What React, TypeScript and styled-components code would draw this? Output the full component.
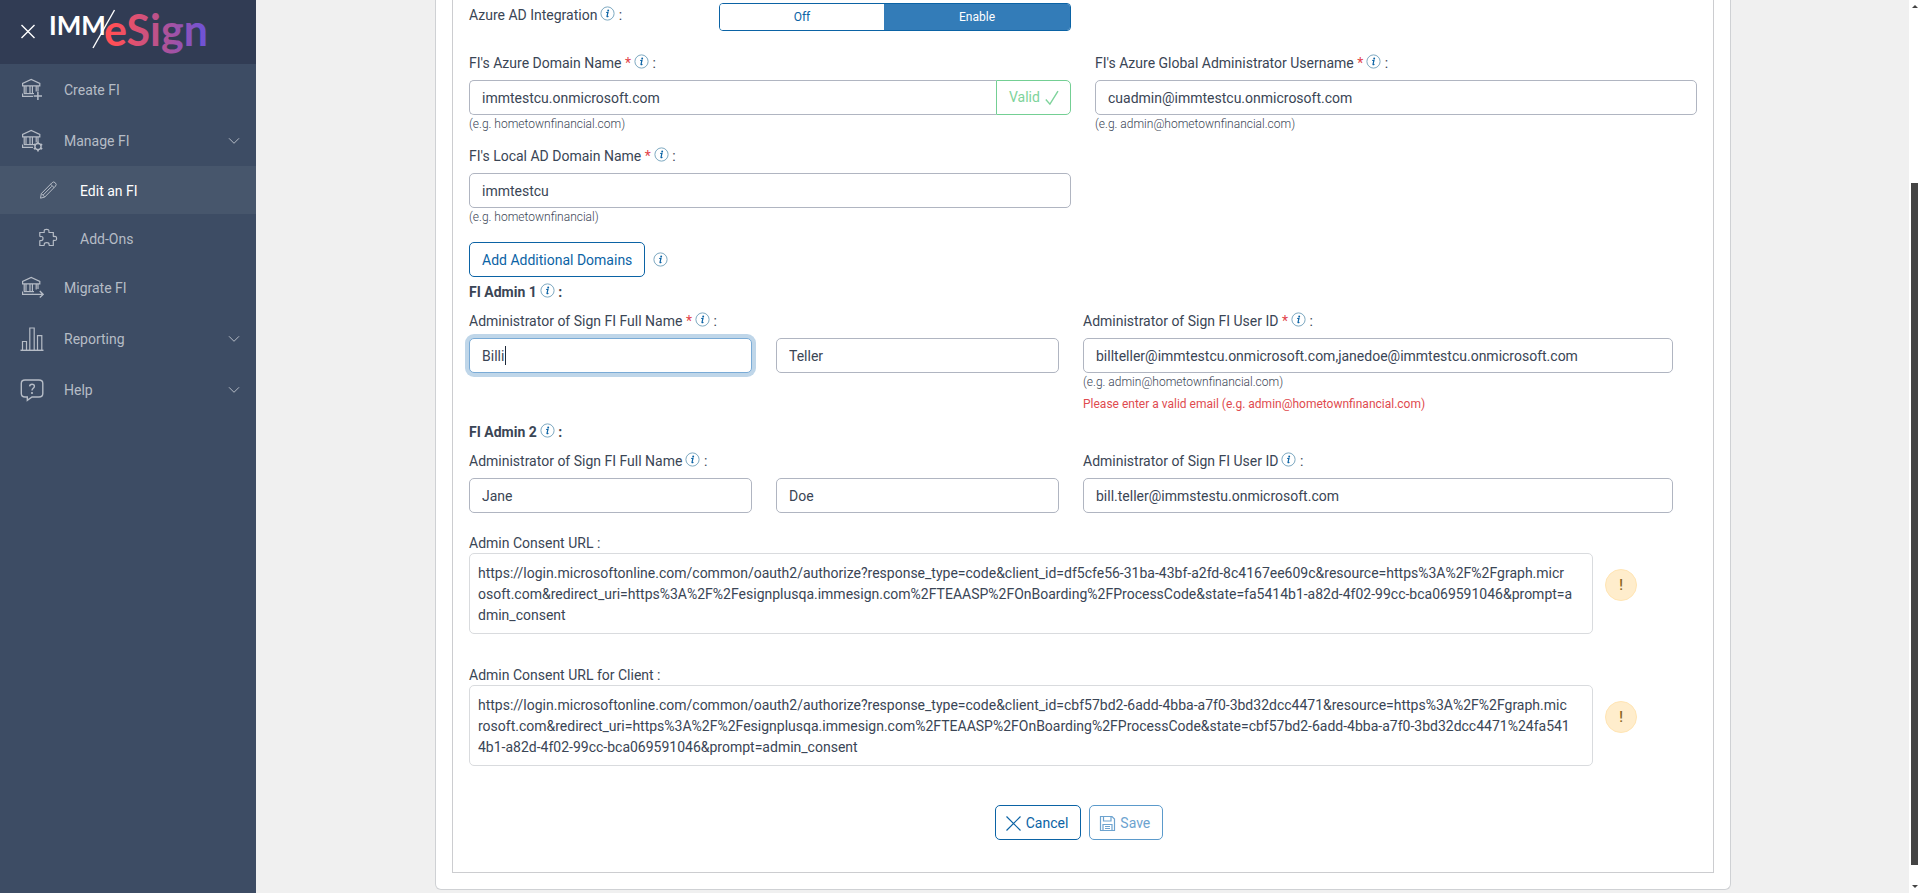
import React, { useId, useState } from "react";
import styled, { createGlobalStyle, css } from "styled-components";

const GlobalStyle = createGlobalStyle`
  *, *::before, *::after { box-sizing: border-box; }
  body {
    margin: 0;
    background: #f0f0f0;
    color: #3a4555;
    font-family: Roboto, "Liberation Sans", sans-serif;
    font-size: 14px;
    line-height: 21px;
  }
  button, input, textarea { font: inherit; color: inherit; }
`;

const Page = styled.div`
  display: flex;
  min-height: 100vh;
`;

/* ---------- Sidebar ---------- */

const Sidebar = styled.aside`
  flex: 0 0 256px;
  background: #3d4c64;
`;

const Brand = styled.header`
  display: flex;
  align-items: center;
  height: 64px;
  padding-left: 20px;
  background: #313c54;
`;

const CloseButton = styled.button`
  display: flex;
  margin: 0 12px 0 0;
  padding: 0;
  border: 0;
  background: none;
  color: #fff;
  cursor: pointer;
`;

const NavList = styled.ul`
  margin: 0;
  padding: 0;
  list-style: none;
`;

const NavLink = styled.a<{ $sub?: boolean; $active?: boolean }>`
  display: flex;
  align-items: center;
  height: ${(p) => (p.$sub ? 48 : 51)}px;
  padding: 0 16px 0 ${(p) => (p.$sub ? 36 : 20)}px;
  background: ${(p) => (p.$active ? "#47566c" : "transparent")};
  color: ${(p) => (p.$active ? "#fff" : "#b6bcc6")};
  text-decoration: none;
`;

const NavIcon = styled.span`
  display: flex;
  flex: 0 0 44px;
  color: #b6bcc6;
`;

const NavText = styled.span`
  flex: 1;
  padding-top: 2px;
`;

/* ---------- Content ---------- */

const Main = styled.main`
  flex: 1;
  min-width: 0;
  padding: 0 178px 0 179px;
`;

const Card = styled.section`
  padding: 0 16px 16px;
  border: 1px solid #cfd1d4;
  border-top: 0;
  border-radius: 0 0 6px 6px;
  background: #fff;
`;

const Panel = styled.form`
  padding: 3px 16px 32px;
  border: 1px solid #cccdd0;
  border-top: 0;
`;

const ToggleRow = styled.div`
  display: flex;
  align-items: flex-start;
  height: 28px;
  margin-bottom: 21px;
  padding-right: 626px;
`;

const ToggleLabel = styled.span`
  flex: 0 0 250px;
  line-height: 25px;
`;

const Toggle = styled.div`
  display: flex;
  flex: 1;
  height: 28px;
  border: 1px solid #0b63a5;
  border-radius: 4px;
  overflow: hidden;
`;

const ToggleOption = styled.button<{ $on?: boolean; $grow: number }>`
  flex: ${(p) => p.$grow} 1 0;
  padding: 0;
  border: 0;
  background: ${(p) => (p.$on ? "#337cb8" : "#fff")};
  color: ${(p) => (p.$on ? "#fff" : "#0b63a5")};
  font-size: 12px;
  line-height: 24px;
`;

const Grid = styled.div<{ $columns: number; $inset?: boolean }>`
  display: grid;
  grid-template-columns: repeat(${(p) => p.$columns}, 1fr);
  column-gap: 24px;
  row-gap: 12px;
  padding-right: ${(p) => (p.$inset ? 24 : 0)}px;
`;

const FieldBox = styled.div<{ $span?: number }>`
  grid-column: span ${(p) => p.$span ?? 1};
  display: flex;
  flex-direction: column;
  justify-content: flex-start;
`;

const Label = styled.label`
  display: block;
  height: 28px;
  line-height: 23px;
  white-space: nowrap;
`;

const LabelSpacer = styled.div`
  height: 28px;
`;

const Required = styled.span`
  color: #e2444b;
`;

const InputWrap = styled.div`
  position: relative;
  display: flex;
`;

const Input = styled.input<{ $focused?: boolean; $joined?: boolean }>`
  flex: 1;
  width: 100%;
  min-width: 0;
  height: 35px;
  padding: 0 12px;
  border: 1px solid #b0b5c1;
  border-radius: ${(p) => (p.$joined ? "5px 0 0 5px" : "5px")};
  background: #fff;
  outline: none;
  ${(p) =>
    p.$joined &&
    css`
      border-right: 0;
    `}
  ${(p) =>
    p.$focused &&
    css`
      border-color: #7aabd6;
      box-shadow: 0 0 0 4px #bfd6e9;
    `}
`;

const Caret = styled.span`
  position: absolute;
  top: 8px;
  left: 36px;
  width: 1px;
  height: 19px;
  background: #1f2a3a;
`;

const ValidTag = styled.span`
  display: flex;
  align-items: center;
  justify-content: space-between;
  flex: 0 0 75px;
  padding: 0 11px 0 12px;
  border: 1px solid #74cf94;
  border-radius: 0 5px 5px 0;
  color: #7ed39b;
`;

const Hint = styled.small`
  font-size: 12px;
  font-weight: 300;
  line-height: 18px;
`;

const FieldError = styled.p`
  margin: 4px 0 0;
  color: #e04b4f;
  font-size: 12px;
  line-height: 18px;
`;

const GroupTitle = styled.h3<{ $gap: number }>`
  margin: ${(p) => p.$gap}px 0 7px;
  font-size: 14px;
  font-weight: 700;
  line-height: 21px;
`;

const Button = styled.button`
  display: inline-flex;
  align-items: center;
  gap: 4px;
  height: 35px;
  padding: 1px 12px 0;
  border: 1px solid #0b63a5;
  border-radius: 5px;
  background: #fff;
  color: #0b63a5;
  cursor: pointer;

  &:disabled {
    border-color: #5b9acb;
    color: #6da3cf;
    cursor: default;
  }
`;

const ActionButton = styled(Button)`
  margin-right: 8px;
  padding: 1px 12px 0 9px;
`;

const DomainRow = styled.div`
  display: flex;
  align-items: center;
  gap: 5px;
  margin-top: 16px;
`;

const ConsentBlock = styled.div<{ $gap: number }>`
  margin-top: ${(p) => p.$gap}px;
`;

const ConsentLabel = styled.label`
  display: block;
  height: 21px;
  line-height: 23px;
`;

const ConsentRow = styled.div`
  display: flex;
  gap: 12px;
  padding-right: 60px;
`;

const UrlBox = styled.textarea`
  display: block;
  flex: 1;
  min-width: 0;
  padding: 9px 8px 7px;
  border: 1px solid #d9dbde;
  border-radius: 5px;
  background: #fff;
  line-height: 21px;
  word-break: break-all;
  resize: none;
  overflow: hidden;
  outline: none;
`;

const WarnBadge = styled.span`
  display: flex;
  align-items: center;
  justify-content: center;
  flex: 0 0 32px;
  height: 32px;
  margin-top: 16px;
  border: 1px solid #ffe5b4;
  border-radius: 50%;
  background: #ffedcc;
  color: #8a6420;
  font-weight: 500;
`;

const Actions = styled.div`
  display: flex;
  justify-content: center;
  margin-top: 39px;
`;

const InfoSvg = styled.svg`
  margin-left: 3px;
  vertical-align: -1px;
`;

/* ---------- Scroll track ---------- */

const Track = styled.div`
  display: flex;
  flex-direction: column;
  flex: 0 0 11px;
  height: 100vh;
  padding: 5px 0 5px 2px;
  background: #fff;
`;

const Arrow = styled.span<{ $down?: boolean }>`
  width: 0;
  height: 0;
  margin-left: 1px;
  border: 3px solid transparent;
  border-top: ${(p) => (p.$down ? "3px solid #444" : "0")};
  border-bottom: ${(p) => (p.$down ? "0" : "3px solid #444")};
`;

const Thumb = styled.span`
  flex: 1;
  width: 7px;
  margin: 175px 0 20px;
  background: #444;
`;

/* ---------- Icons ---------- */

const stroke = { fill: "none", stroke: "currentColor", strokeWidth: 1.2 } as const;

const Info = () => (
  <InfoSvg width="15" height="15" viewBox="0 0 15 15" role="img" aria-label="More information">
    <circle cx="7.5" cy="7.5" r="6.6" fill="none" stroke="#6f9fba" strokeWidth="0.9" />
    <circle cx="8.2" cy="4.4" r="0.95" fill="#0b63a5" />
    <path d="M6.2 6.5 L8 6.2 L7 10.4 Q6.9 11.1 8.4 10.2" fill="none" stroke="#0b63a5" strokeWidth="1.2" />
  </InfoSvg>
);

const CloseIcon = () => (
  <svg width="16" height="16" viewBox="0 0 16 16" {...stroke} aria-hidden>
    <path d="M1.5 1 L14.5 14 M14.5 1 L1.5 14" strokeWidth="1.4" />
  </svg>
);

const Bank = ({ children }: { children?: React.ReactNode }) => (
  <svg width="24" height="24" viewBox="0 0 24 24" {...stroke} aria-hidden>
    <path d="M2.6 7.9 V5.4 L11.2 1.5 L19.8 5.4 V7.9 Z" />
    <path d="M4.2 8 V15.5 M6 8 V15.5 M10 8 V15.5 M12.4 8 V15.5 M16.2 8 V13.5 M18 8 V13" />
    <path d="M4 15.6 H14" />
    <path d="M13 18.4 H2.6 V15.6" />
    {children}
  </svg>
);

const BankPlus = () => (
  <Bank>
    <path d="M17.9 13.6 V22 M13.7 17.9 H22" strokeWidth="1.5" />
  </Bank>
);

const BankGear = () => (
  <Bank>
    <circle cx="18" cy="17.6" r="3.1" strokeWidth="1.4" />
    <path
      d="M18 12.8 V14.5 M18 20.7 V22.4 M13.8 15.2 L15.3 16 M20.7 19.2 L22.2 20 M13.8 20 L15.3 19.2 M20.7 16 L22.2 15.2"
      strokeWidth="1.7"
    />
  </Bank>
);

const BankArrow = () => (
  <Bank>
    <path d="M12.5 18.4 H23 M19.8 15 L23.2 18.4 L19.8 21.6" strokeWidth="1.4" />
  </Bank>
);

const BarsIcon = () => (
  <svg width="24" height="26" viewBox="0 0 24 26" {...stroke} aria-hidden>
    <path d="M0.5 24.3 H23.5" strokeWidth="1.4" />
    <path d="M2.5 24 V15.5 H6.5 V24 M9.8 24 V2 H14.2 V24 M17.5 24 V9.7 H21.8 V24" />
  </svg>
);

const HelpIcon = () => (
  <svg width="24" height="24" viewBox="0 0 24 24" {...stroke} aria-hidden>
    <path
      d="M5 2 H19 Q22.8 2 22.8 5.5 V15.5 Q22.8 19 19 19 H12 L7.3 22.4 V19 H5 Q1.3 19 1.3 15.5 V5.5 Q1.3 2 5 2 Z"
      strokeWidth="1.4"
    />
    <path d="M9.6 8.4 Q9.8 6.2 12 6.2 Q14.4 6.2 14.4 8.3 Q14.4 9.5 13.1 10.3 Q12 11 12 12.6" strokeWidth="1.4" />
    <circle cx="12" cy="15" r="0.5" />
  </svg>
);

const PencilIcon = () => (
  <svg width="24" height="20" viewBox="0 0 24 20" {...stroke} strokeWidth="1" aria-hidden>
    <path d="M4.5 18.2 L5.3 13.6 L16.2 2.6 Q17.6 1.2 19.2 2.7 Q21 4.4 19.6 6 L8.8 17 Z M14.6 4.3 L18.1 7.6 M5.3 13.6 L8.8 17" />
    <path d="M7.2 15 L15.8 6.3" />
  </svg>
);

const PuzzleIcon = () => (
  <svg width="24" height="20" viewBox="0 0 24 20" {...stroke} aria-hidden>
    <path d="M3.8 4.5 H8 Q8.6 4.3 8.2 3.4 Q7.9 1.3 10.6 1.3 Q13.3 1.3 12.9 3.4 Q12.6 4.3 13.2 4.5 H17.3 V8 Q17.5 8.9 18.4 8.4 Q20.6 8 20.6 10.4 Q20.6 12.9 18.4 12.4 Q17.5 12 17.3 12.9 V17.5 H13.4 Q12.8 17.2 13.1 16.4 Q13.1 14.6 10.7 14.6 Q8.2 14.6 8.2 16.4 Q8.5 17.2 7.9 17.5 H3.8 V13 Q4 12.3 5 12.6 Q7 12.6 7 10.5 Q7 8.4 5 8.5 Q4 8.8 3.8 8 Z" />
  </svg>
);

const Chevron = () => (
  <svg width="12" height="8" viewBox="0 0 12 8" {...stroke} strokeWidth="1" aria-hidden>
    <path d="M1 1.3 L6 6.3 L11 1.3" />
  </svg>
);

const CheckIcon = () => (
  <svg width="14" height="16" viewBox="0 0 14 16" {...stroke} strokeWidth="1.4" aria-hidden>
    <path d="M0.8 9.5 L4.9 14.2 L13 1.2" />
  </svg>
);

const CancelIcon = () => (
  <svg width="17" height="17" viewBox="0 0 17 17" {...stroke} aria-hidden>
    <path d="M1.5 1.5 L15.5 15.5 M15.5 1.5 L1.5 15.5" />
  </svg>
);

const SaveIcon = () => (
  <svg width="17" height="17" viewBox="0 0 17 17" {...stroke} aria-hidden>
    <path d="M1.5 1.5 H13 L15.5 4 V15.5 H1.5 Z M4.5 1.5 V6 H12 V1.5 M4 15.5 V9.5 H13 V15.5 M6 11.5 H11 M6 13.5 H11" />
  </svg>
);

const Logo = () => (
  <svg width="176" height="64" viewBox="0 0 176 64" role="img" aria-label="IMM/eSign">
    <defs>
      <linearGradient id="esign" gradientUnits="userSpaceOnUse" x1="56" y1="0" x2="158" y2="0">
        <stop offset="0.1" stopColor="#ff4f57" />
        <stop offset="0.5" stopColor="#bf5289" />
        <stop offset="1" stopColor="#6c53d8" />
      </linearGradient>
    </defs>
    <text x="1" y="35" fill="#fff" fontFamily="Lato, sans-serif" fontWeight="700" fontSize="26">
      IMM
    </text>
    <path d="M45 48 L66.5 10" stroke="#fff" strokeWidth="1.4" />
    <text x="56" y="46" fill="url(#esign)" fontFamily="Lato, sans-serif" fontWeight="700" fontSize="43">
      eSign
    </text>
  </svg>
);

/* ---------- Composite parts ---------- */

interface FieldProps {
  label?: string;
  ariaLabel?: string;
  value: string;
  required?: boolean;
  hint?: string;
  error?: string;
  valid?: boolean;
  focused?: boolean;
  span?: number;
}

const Field = ({ label, ariaLabel, value, required, hint, error, valid, focused, span }: FieldProps) => {
  const id = useId();
  const [text, setText] = useState(value);
  return (
    <FieldBox $span={span}>
      {label ? (
        <Label htmlFor={id}>
          {label}
          {required && <Required> *</Required>}
          <Info /> :
        </Label>
      ) : (
        <LabelSpacer />
      )}
      <InputWrap>
        <Input
          id={id}
          type="text"
          aria-label={ariaLabel}
          value={text}
          onChange={(e) => setText(e.target.value)}
          $joined={valid}
          $focused={focused}
        />
        {focused && <Caret />}
        {valid && (
          <ValidTag>
            Valid <CheckIcon />
          </ValidTag>
        )}
      </InputWrap>
      {hint && <Hint>{hint}</Hint>}
      {error && <FieldError>{error}</FieldError>}
    </FieldBox>
  );
};

const Consent = ({ label, url, gap }: { label: string; url: string; gap: number }) => {
  const id = useId();
  return (
    <ConsentBlock $gap={gap}>
      <ConsentLabel htmlFor={id}>{label} :</ConsentLabel>
      <ConsentRow>
        <UrlBox id={id} rows={3} readOnly spellCheck={false} value={url} />
        <WarnBadge>!</WarnBadge>
      </ConsentRow>
    </ConsentBlock>
  );
};

const navItems = [
  { text: "Create FI", icon: <BankPlus /> },
  { text: "Manage FI", icon: <BankGear />, menu: true },
  { text: "Edit an FI", icon: <PencilIcon />, sub: true, active: true },
  { text: "Add-Ons", icon: <PuzzleIcon />, sub: true },
  { text: "Migrate FI", icon: <BankArrow /> },
  { text: "Reporting", icon: <BarsIcon />, menu: true },
  { text: "Help", icon: <HelpIcon />, menu: true },
];

const consentUrl = [
  "https://login.microsoftonline.com/common/oauth2/authorize?response_type=code&client_id=df5cfe56-31ba-43bf-a2fd-8c4167ee609c&resource=https%3A%2F%2Fgraph.micr",
  "osoft.com&redirect_uri=https%3A%2F%2Fesignplusqa.immesign.com%2FTEAASP%2FOnBoarding%2FProcessCode&state=fa5414b1-a82d-4f02-99cc-bca069591046&prompt=a",
  "dmin_consent",
].join("\n");

const clientConsentUrl = [
  "https://login.microsoftonline.com/common/oauth2/authorize?response_type=code&client_id=cbf57bd2-6add-4bba-a7f0-3bd32dcc4471&resource=https%3A%2F%2Fgraph.mic",
  "rosoft.com&redirect_uri=https%3A%2F%2Fesignplusqa.immesign.com%2FTEAASP%2FOnBoarding%2FProcessCode&state=cbf57bd2-6add-4bba-a7f0-3bd32dcc4471%24fa541",
  "4b1-a82d-4f02-99cc-bca069591046&prompt=admin_consent",
].join("\n");

export default function App() {
  const [azure, setAzure] = useState(true);
  return (
    <>
      <GlobalStyle />
      <Page>
        <Sidebar>
          <Brand>
            <CloseButton type="button" aria-label="Close menu">
              <CloseIcon />
            </CloseButton>
            <Logo />
          </Brand>
          <nav>
            <NavList>
              {navItems.map((item) => (
                <li key={item.text}>
                  <NavLink href="#" $sub={item.sub} $active={item.active}>
                    <NavIcon>{item.icon}</NavIcon>
                    <NavText>{item.text}</NavText>
                    {item.menu && <Chevron />}
                  </NavLink>
                </li>
              ))}
            </NavList>
          </nav>
        </Sidebar>

        <Main>
          <Card>
            <Panel onSubmit={(e) => e.preventDefault()}>
              <ToggleRow>
                <ToggleLabel id="azure-label">
                  Azure AD Integration
                  <Info /> :
                </ToggleLabel>
                <Toggle role="group" aria-labelledby="azure-label">
                  <ToggleOption type="button" $grow={164} $on={!azure} onClick={() => setAzure(false)}>
                    Off
                  </ToggleOption>
                  <ToggleOption type="button" $grow={186} $on={azure} onClick={() => setAzure(true)}>
                    Enable
                  </ToggleOption>
                </Toggle>
              </ToggleRow>

              <Grid $columns={2}>
                <Field
                  label="FI's Azure Domain Name"
                  required
                  valid
                  value="immtestcu.onmicrosoft.com"
                  hint="(e.g. hometownfinancial.com)"
                />
                <Field
                  label="FI's Azure Global Administrator Username"
                  required
                  value="cuadmin@immtestcu.onmicrosoft.com"
                  hint="(e.g. admin@hometownfinancial.com)"
                />
                <Field
                  label="FI's Local AD Domain Name"
                  required
                  value="immtestcu"
                  hint="(e.g. hometownfinancial)"
                />
              </Grid>

              <DomainRow>
                <Button type="button">Add Additional Domains</Button>
                <Info />
              </DomainRow>

              <GroupTitle $gap={5}>
                FI Admin 1<Info /> :
              </GroupTitle>
              <Grid $columns={4} $inset>
                <Field label="Administrator of Sign FI Full Name" required focused value="Billi" />
                <Field ariaLabel="Last name of administrator 1" value="Teller" />
                <Field
                  label="Administrator of Sign FI User ID"
                  required
                  span={2}
                  value="billteller@immtestcu.onmicrosoft.com,janedoe@immtestcu.onmicrosoft.com"
                  hint="(e.g. admin@hometownfinancial.com)"
                  error="Please enter a valid email (e.g. admin@hometownfinancial.com)"
                />
              </Grid>

              <GroupTitle $gap={9}>
                FI Admin 2<Info /> :
              </GroupTitle>
              <Grid $columns={4} $inset>
                <Field label="Administrator of Sign FI Full Name" value="Jane" />
                <Field ariaLabel="Last name of administrator 2" value="Doe" />
                <Field label="Administrator of Sign FI User ID" span={2} value="bill.teller@immstestu.onmicrosoft.com" />
              </Grid>

              <Consent label="Admin Consent URL" url={consentUrl} gap={19} />
              <Consent label="Admin Consent URL for Client" url={clientConsentUrl} gap={30} />

              <Actions>
                <ActionButton type="button">
                  <CancelIcon /> Cancel
                </ActionButton>
                <ActionButton type="submit" disabled>
                  <SaveIcon /> Save
                </ActionButton>
              </Actions>
            </Panel>
          </Card>
        </Main>

        <Track aria-hidden>
          <Arrow />
          <Thumb />
          <Arrow $down />
        </Track>
      </Page>
    </>
  );
}
